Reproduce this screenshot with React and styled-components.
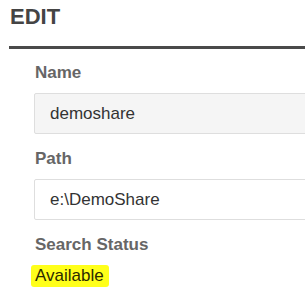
import styled, { createGlobalStyle } from "styled-components";

const GlobalStyle = createGlobalStyle`
  body {
    margin: 0;
    background: #fff;
    font-family: "Liberation Sans", Arial, sans-serif;
  }
`;

const Page = styled.div`
  width: 305px;
  height: 299px;
  overflow: hidden;
`;

const Header = styled.header`
  margin-left: 9px;
  padding-top: 4px;
  padding-left: 1px;
  height: 42px;
  border-bottom: 3px solid #4a4a4a;
  box-sizing: border-box;
  height: 49px;
`;

const Title = styled.h1`
  margin: 0;
  font-size: 22px;
  line-height: 26px;
  font-weight: bold;
  color: #444;
`;

const Form = styled.div`
  padding: 14px 0 0 34px;
`;

const Label = styled.div`
  font-size: 17px;
  line-height: 20px;
  font-weight: bold;
  color: #666;
  margin-top: ${(p) => (p.$first ? "0" : "15px")};
  margin-bottom: ${(p) => (p.$gap || 10)}px;
  padding-left: 1px;
`;

const Input = styled.div`
  width: 300px;
  height: 41px;
  box-sizing: border-box;
  border: 1px solid #dedede;
  border-radius: 2px;
  background: ${(p) => (p.$readonly ? "#f5f5f5" : "#fff")};
  padding-left: 15px;
  display: flex;
  align-items: center;
  font-size: 17px;
  color: #333;
`;

const Highlight = styled.span`
  display: inline-block;
  margin-left: -3px;
  padding: 0 5px 0 4px;
  height: 22px;
  line-height: 22px;
  font-size: 17px;
  color: #2b2b00;
  background: #ffff1a;
  border-radius: 3px;
`;

export default function App() {
  return (
    <Page>
      <GlobalStyle />
      <Header>
        <Title>EDIT</Title>
      </Header>
      <Form>
        <Label $first>Name</Label>
        <Input $readonly>demoshare</Input>
        <Label>Path</Label>
        <Input>e:\DemoShare</Input>
        <Label $gap={10}>Search Status</Label>
        <Highlight>Available</Highlight>
      </Form>
    </Page>
  );
}
